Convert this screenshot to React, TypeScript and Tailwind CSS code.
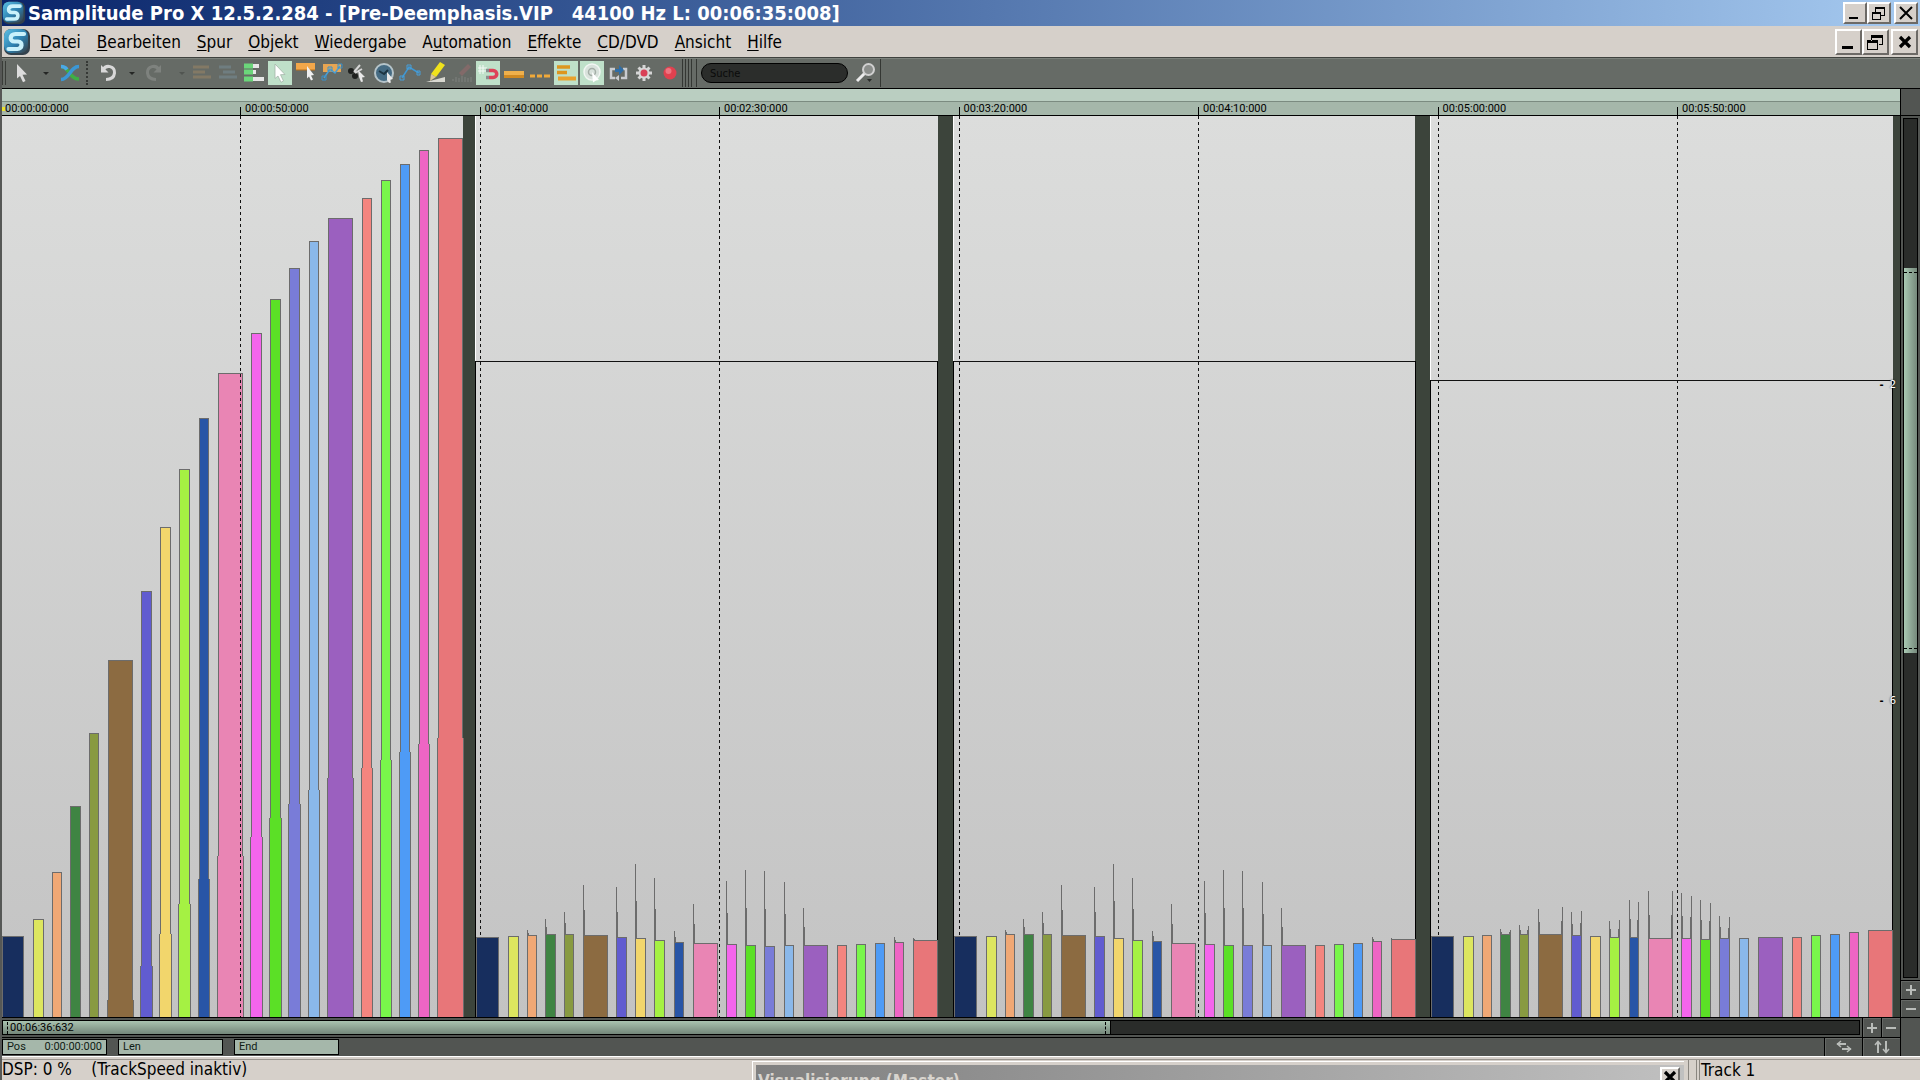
import type { ReactNode } from "react";

const menuItems = [
  ["D", "atei"],
  ["B", "earbeiten"],
  ["S", "pur"],
  ["O", "bjekt"],
  ["W", "iedergabe"],
  ["A", "utomation", "u"],
  ["E", "ffekte"],
  ["C", "D/DVD"],
  ["A", "nsicht"],
  ["H", "ilfe"],
];

const times = [
  "00:00:50:000",
  "00:01:40:000",
  "00:02:30:000",
  "00:03:20:000",
  "00:04:10:000",
  "00:05:00:000",
  "00:05:50:000",
];

const colors = [
  "#172e5e",
  "#dde65f",
  "#f0a875",
  "#3f8443",
  "#889a41",
  "#8c6b41",
  "#615cd0",
  "#f2d66c",
  "#a5f143",
  "#2855a6",
  "#e985b4",
  "#f465ec",
  "#5be026",
  "#797cd8",
  "#8ab8ea",
  "#9b60bf",
  "#f4857f",
  "#79f64b",
  "#4e9bf6",
  "#ee65c4",
  "#e87679",
];

// x, width, top, y where the bar gets one pixel wider on both sides
const rampBars = [
  [2, 22, 936, 0],
  [33, 11, 919, 0],
  [52, 10, 872, 0],
  [70, 11, 806, 0],
  [89, 10, 733, 0],
  [108, 25, 660, 1000],
  [141, 11, 591, 966],
  [160, 11, 527, 934],
  [179, 11, 469, 904],
  [199, 10, 418, 879],
  [218, 25, 373, 856],
  [251, 11, 333, 837],
  [270, 11, 299, 818],
  [289, 11, 268, 804],
  [309, 10, 241, 790],
  [328, 25, 218, 778],
  [362, 10, 198, 768],
  [381, 10, 180, 760],
  [400, 10, 164, 752],
  [419, 10, 150, 744],
  [438, 25, 138, 738],
];

const slots = [
  [0, 23],
  [32, 11],
  [51, 10],
  [69, 11],
  [88, 10],
  [107, 25],
  [140, 11],
  [159, 11],
  [178, 11],
  [198, 10],
  [217, 25],
  [250, 11],
  [269, 11],
  [288, 11],
  [308, 10],
  [327, 25],
  [361, 10],
  [380, 10],
  [399, 10],
  [418, 10],
  [437, 25],
];

type Clip = {
  x: number;
  line: number;
  tops: number[];
  // slot, left peak, right peak
  peaks: number[][];
};

const singlePeaks = [
  [2, 930, 0],
  [3, 919, 0],
  [4, 912, 0],
  [5, 885, 0],
  [6, 887, 0],
  [7, 864, 0],
  [8, 878, 0],
  [9, 931, 0],
  [10, 904, 0],
  [11, 881, 0],
  [12, 870, 0],
  [13, 871, 0],
  [14, 882, 0],
  [15, 908, 0],
  [19, 937, 0],
  [20, 938, 0],
];

const clips: Clip[] = [
  {
    x: 476,
    line: 361,
    tops: [937, 936, 935, 934, 934, 935, 937, 938, 940, 942, 943, 944, 945, 946, 945, 945, 945, 944, 943, 942, 940],
    peaks: singlePeaks,
  },
  {
    x: 954,
    line: 361,
    tops: [936, 936, 934, 934, 934, 935, 936, 938, 940, 941, 943, 944, 945, 945, 945, 945, 945, 944, 943, 941, 939],
    peaks: singlePeaks,
  },
  {
    x: 1431,
    line: 380,
    tops: [936, 936, 935, 934, 934, 934, 935, 936, 937, 937, 938, 938, 939, 938, 938, 937, 937, 935, 934, 932, 930],
    peaks: [
      [3, 929, 930],
      [4, 925, 926],
      [5, 909, 907],
      [6, 912, 911],
      [8, 921, 920],
      [9, 900, 902],
      [10, 891, 891],
      [11, 893, 896],
      [12, 900, 903],
      [13, 916, 917],
    ],
  },
];

const bands = [
  [463, 12],
  [938, 15],
  [1415, 15],
  [1893, 7],
];

const gridLines = [240, 480, 719, 959, 1198, 1438, 1677];

const BOTTOM = 1017;

function Bar({ x, w, top, fill }: { x: number; w: number; top: number; fill: string }) {
  return (
    <>
      <rect x={x} y={top} width={w} height={BOTTOM - top} fill="#6c6c6c" />
      <rect x={x + 1} y={top + 1} width={w - 2} height={BOTTOM - top - 1} fill={fill} />
    </>
  );
}

function Peak({ x, peak, top, dir }: { x: number; peak: number; top: number; dir: number }) {
  const wide = Math.round(peak + (top - peak) * 0.5);
  return (
    <>
      <rect x={x} y={peak} width={1} height={top - peak} fill="#6c6c6c" />
      <rect x={x + dir} y={wide} width={1} height={top - wide} fill="#6c6c6c" />
    </>
  );
}

function Waveform() {
  return (
    <svg
      className="absolute inset-0 h-full w-full"
      viewBox="2 116 1898 901"
      preserveAspectRatio="none"
      shapeRendering="crispEdges"
    >
      {bands.map(([x, w]) => (
        <rect key={x} x={x} y={116} width={w} height={901} fill="#3c443b" />
      ))}
      {rampBars.map(([x, w, top, step], i) => (
        <g key={i}>
          {step > 0 && (
            <rect x={x - 1} y={step} width={w + 2} height={BOTTOM - step} fill="#6c6c6c" />
          )}
          <Bar x={x} w={w} top={top} fill={colors[i]} />
          {step > 0 && (
            <rect x={x} y={step} width={w} height={BOTTOM - step} fill={colors[i]} />
          )}
        </g>
      ))}
      {clips.map((clip) => (
        <g key={clip.x}>
          <rect x={clip.x - 1} y={116} width={1} height={clip.line - 116} fill="#ffffff" />
          <rect x={clip.x - 1} y={clip.line} width={1} height={BOTTOM - clip.line} fill="#000000" />
          <rect x={clip.x} y={clip.line} width={461} height={1} fill="#111111" />
          <rect x={clip.x + 461} y={clip.line} width={1} height={BOTTOM - clip.line} fill="#000000" />
        </g>
      ))}
      {gridLines.map((x) => (
        <line
          key={x}
          x1={x + 0.5}
          x2={x + 0.5}
          y1={116}
          y2={BOTTOM}
          stroke="#111111"
          strokeDasharray="3 3"
        />
      ))}
      {clips.map((clip) => (
        <g key={clip.x}>
          {slots.map(([x, w], i) => (
            <Bar key={i} x={clip.x + x} w={w} top={clip.tops[i]} fill={colors[i]} />
          ))}
          {clip.peaks.map(([slot, left, right]) => (
            <g key={slot}>
              <Peak x={clip.x + slots[slot][0]} peak={left} top={clip.tops[slot]} dir={1} />
              {right > 0 && (
                <Peak
                  x={clip.x + slots[slot][0] + slots[slot][1] - 1}
                  peak={right}
                  top={clip.tops[slot]}
                  dir={-1}
                />
              )}
            </g>
          ))}
        </g>
      ))}
    </svg>
  );
}

function Logo({ className }: { className: string }) {
  return (
    <svg className={className} viewBox="0 0 28 28">
      <defs>
        <linearGradient id="logo" x1="0" y1="0" x2="1" y2="1">
          <stop offset="0" stopColor="#5cc0e4" />
          <stop offset="0.55" stopColor="#2c7fae" />
          <stop offset="1" stopColor="#3a3f44" />
        </linearGradient>
      </defs>
      <rect x="1" y="1" width="26" height="26" rx="7" fill="#33414c" />
      <rect x="1" y="1" width="24" height="24" rx="7" fill="url(#logo)" />
      <path
        d="M21 6H12.500C6.500 6 6 13.500 11.500 13.500H15C20 13.500 19.500 21 14.500 21H5.500"
        fill="none"
        stroke="#c9f1fb"
        strokeWidth="4.200"
        strokeLinecap="round"
      />
    </svg>
  );
}

function MinIcon({ thick = false }) {
  return (
    <svg className="h-5 w-5 shrink-0" viewBox="0 0 20 20" shapeRendering="crispEdges">
      <rect x={thick ? 3 : 4} y={thick ? 14 : 14} width={thick ? 11 : 9} height={thick ? 3 : 2} fill="#000" />
    </svg>
  );
}

function RestoreIcon({ thick = false }) {
  return (
    <svg className="h-5 w-5 shrink-0" viewBox="0 0 20 20" shapeRendering="crispEdges">
      {thick ? (
        <path
          d="M5 3h12v10h-4v-1h3V6H6v3H5zM1 8h11v10H1zM2 11v6h9v-6z"
          fill="#000"
          fillRule="evenodd"
        />
      ) : (
        <path
          d="M6 4h10v9h-4v-1h3V6H7v3H6zM3 9h9v8H3zM4 11v5h7v-5z"
          fill="#000"
          fillRule="evenodd"
        />
      )}
    </svg>
  );
}

function CloseIcon({ thick = false }) {
  return (
    <svg className="h-5 w-5 shrink-0" viewBox="0 0 20 20">
      {thick ? (
        <path d="M5 5L15 15M15 5L5 15" stroke="#000" strokeWidth="3.200" />
      ) : (
        <path d="M4 4L16 16M16 4L4 16" stroke="#000" strokeWidth="2" />
      )}
    </svg>
  );
}

function WinButton({ label, className, children }: { label: string; className: string; children: ReactNode }) {
  return (
    <button
      aria-label={label}
      className={`flex items-center justify-center overflow-hidden border-2 border-t-white border-l-white border-r-[#6d6a66] border-b-[#6d6a66] bg-[#d6d0ca] ${className}`}
    >
      {children}
    </button>
  );
}

function Tool({ label, on = false, dim = false, children }: { label: string; on?: boolean; dim?: boolean; children: ReactNode }) {
  return (
    <button
      aria-label={label}
      className={`flex h-6 w-6 shrink-0 items-center justify-center ${on ? "bg-[#bfe0c9]" : ""}`}
    >
      <svg className={`h-6 w-6 ${dim ? "opacity-30" : ""}`} viewBox="0 0 24 24" fill="none">
        {children}
      </svg>
    </button>
  );
}

const cursorPath = "M7 3L17 13.500L12.500 13.700L15.500 20L13 21.300L10 15L7 17.500Z";

function Caret() {
  return (
    <svg className="h-2 w-2 shrink-0" viewBox="0 0 8 8">
      <path d="M1 3h6l-3 3z" fill="#242624" />
    </svg>
  );
}

function Toolbar() {
  return (
    <div className="flex h-8 shrink-0 items-center border-t border-b border-t-[#3f423e] border-b-black bg-[#666b66] shadow-[inset_0_1px_0_#7d827c]">
      <div className="h-6 w-1 border-x border-[#3a3d39]" />
      <div className="ml-1 flex items-center">
        <Tool label="Auswahl">
          <path d={cursorPath} fill="#dcdcdc" />
        </Tool>
      </div>
      <div className="ml-2">
        <Caret />
      </div>
      <div className="ml-2">
        <Tool label="Crossfade">
          <path d="M3 5.500C11 5.500 11 18 21 18" stroke="#3fae45" strokeWidth="3.500" />
          <path d="M3 18.500C12 18 12 5.500 21 5.500" stroke="#3b97d6" strokeWidth="3.500" />
          <path d="M3 5.500C6 5.500 8 7 9 8.500" stroke="#4aa8e8" strokeWidth="3.500" />
        </Tool>
      </div>
      <div className="ml-1 h-6 border-l-2 border-dotted border-[#363936]" />
      <div className="ml-2 flex items-center gap-2">
        <Tool label="Rückgängig">
          <path d="M5 4v7.500h7.500z" fill="#d8d8d8" />
          <path d="M7 9C10 3 19 5 18.500 12C18 17 15 18.500 10 18.500" stroke="#d8d8d8" strokeWidth="3" />
        </Tool>
        <Caret />
      </div>
      <div className="ml-1.5 flex items-center gap-3">
        <Tool label="Wiederherstellen" dim>
          <path d="M19 4v7.500h-7.500z" fill="#b8b8b8" />
          <path d="M17 9C14 3 5 5 5.500 12C6 17 9 18.500 14 18.500" stroke="#b8b8b8" strokeWidth="3" />
        </Tool>
        <div className="opacity-30">
          <Caret />
        </div>
      </div>
      <div className="ml-1 flex items-center gap-0.5">
        <Tool label="Spuren" dim>
          <path d="M3 6h16M3 11h12M3 16h18" stroke="#c79a63" strokeWidth="3" />
        </Tool>
        <Tool label="Objekte" dim>
          <path d="M3 6h12M7 11h12M3 16h18" stroke="#84a9bd" strokeWidth="3" />
        </Tool>
        <Tool label="Gruppe">
          <path d="M4 5h13M4 11h10M4 18h18" stroke="#e6e6e6" strokeWidth="4" />
          <path d="M2 5h9M2 11h9M2 18h9" stroke="#6bd67a" strokeWidth="5" />
        </Tool>
        <Tool label="Universalmodus" on>
          <path d={cursorPath} fill="#ffffff" stroke="#a5b5aa" strokeWidth="0.800" />
        </Tool>
        <Tool label="Bereich">
          <rect x="2" y="2" width="19" height="7" fill="#f3a74a" />
          <path d="M2 9h19" stroke="#b8701c" />
          <path d="M13 5l7 9-3 .5 2 4-2 1-2-4-2 2z" fill="#f0f0f0" />
        </Tool>
        <Tool label="Objektkurve">
          <rect x="3" y="3" width="18" height="8" fill="#e8a552" />
          <path d="M4 17L10 8L15 12L20 5" stroke="#479fd8" strokeWidth="1.500" />
          <path d="M2 15h4v4H2zM8 6h4v4H8zM18 3h4v4h-4z" stroke="#3991cc" />
        </Tool>
        <Tool label="Schneiden">
          <circle cx="5" cy="10" r="3" fill="#1f211f" />
          <circle cx="9" cy="15" r="3" fill="#1f211f" />
          <path d="M8 11l6-7M9 12l7-4" stroke="#d5d5d5" strokeWidth="2" />
          <path d="M12 9l7 7-3 .5 1 4-2 .5-2-5z" fill="#e8e8e8" />
        </Tool>
        <Tool label="Zeit">
          <circle cx="12" cy="12" r="9" fill="#456b83" stroke="#b5c4ca" strokeWidth="2" />
          <path d="M7 10l5 3 4-4" stroke="#1c3442" strokeWidth="2" />
          <path d="M15 11l6 7-3 .5 1 3-2 .5-2-3z" fill="#e8e8e8" />
        </Tool>
        <Tool label="Automation">
          <path d="M4 17L11 6L21 12" stroke="#3f97d4" strokeWidth="1.500" />
          <path d="M2 15h4v4H2zM9 4h4v4H9zM19 10h3v4h-3z" stroke="#49a0da" />
        </Tool>
        <Tool label="Stift">
          <path d="M2 21h19V16z" fill="#d8d8d0" />
          <path d="M7 13L16 1l5 3-9 12z" fill="#f0e21c" />
          <path d="M7 13l5 3-6 4z" fill="#d8c49a" />
        </Tool>
        <Tool label="Wellenform" dim>
          <path d="M9 12L18 3l3 3-9 9z" fill="#c56a70" />
          <path d="M3 18v2M6 16v5M9 17v4M12 15v6M15 16v5M18 17v4M21 16v5" stroke="#b9b9b9" />
        </Tool>
        <Tool label="Raster" on>
          <path d="M2 7h9M2 10h9M4 4v9M7 4v9" stroke="#f5faf6" />
          <path d="M13 9.500h4c5 0 5 7 0 7h-4" stroke="#dd4459" strokeWidth="3.500" />
          <path d="M10 9.500h3M10 16.500h3" stroke="#8b8d90" strokeWidth="3.500" />
        </Tool>
        <Tool label="Objekt">
          <rect x="2" y="10" width="20" height="7" fill="#efb04c" />
          <path d="M2 15.500h20" stroke="#d18a22" strokeWidth="3" />
        </Tool>
        <Tool label="Teilobjekte">
          <path d="M2 15h5M9 15h5M16 15h6" stroke="#f0a93a" strokeWidth="3" />
        </Tool>
        <Tool label="Ebenen" on>
          <path d="M3 6h13M3 11.500h10" stroke="#dd961f" strokeWidth="3.500" />
          <path d="M4 17.500h18" stroke="#e9a22d" strokeWidth="4" />
        </Tool>
        <Tool label="Scrub" on>
          <circle cx="12" cy="11" r="8" fill="#d9e2dc" stroke="#f2f6f3" strokeWidth="1.500" />
          <circle cx="12" cy="11" r="3.500" stroke="#a4aea7" strokeWidth="1.500" />
          <path d="M12 11l7 8-3 .5-3 2z" fill="#ffffff" />
        </Tool>
        <Tool label="Loop">
          <path d="M9 8H5v9h4M15 17h5V8h-3" stroke="#c9ccd0" strokeWidth="2.500" />
          <path d="M9 8h4V4l5 5-5 5v-3H9z" fill="#2f6da6" />
          <path d="M13 14v6l-4-3z" fill="#c9ccd0" />
        </Tool>
        <Tool label="Einstellungen">
          <path d="M12 4v16M4 12h16M6.500 6.500l11 11M17.500 6.500l-11 11" stroke="#d6d6d6" strokeWidth="3" />
          <circle cx="12" cy="12" r="5.500" fill="#d6d6d6" />
          <circle cx="12" cy="12" r="3.500" fill="#d93f56" />
        </Tool>
        <Tool label="Aufnahme">
          <circle cx="12" cy="12" r="6.500" fill="#e0414f" />
          <circle cx="10.500" cy="10" r="3" fill="#ee7480" />
        </Tool>
      </div>
      <div className="flex h-7 items-center gap-0.5">
        <div className="h-7 w-1 border-x border-[#343733]" />
        <div className="h-7 w-1 border-x border-[#343733]" />
      </div>
      <div className="ml-1 flex h-7 items-center border-r border-l border-[#343733] pl-1">
        <input
          aria-label="Suche"
          placeholder="Suche"
          className="h-5 w-[147px] rounded-full border border-black bg-[#2b2d2b] px-2 text-[11px] placeholder:text-[#0a0b0a]"
        />
        <button aria-label="Suchen" className="ml-1 flex h-6 w-7 items-center justify-center">
          <svg className="h-6 w-6" viewBox="0 0 24 24" fill="none">
            <path d="M3 20L11 12" stroke="#ececec" strokeWidth="3" />
            <circle cx="14.500" cy="8.500" r="5.500" fill="#8b8e8b" stroke="#d0d0d0" strokeWidth="2" />
            <path d="M13 18h5l-2.500 3z" fill="#2a2c2a" />
          </svg>
        </button>
      </div>
    </div>
  );
}

function Field({ label, value }: { label: string; value: string }) {
  return (
    <label className="flex h-4 w-[105px] items-center border border-black bg-[#a5b7aa] px-1 font-[Roboto,sans-serif] text-[11px] leading-3 text-[#0f1c15]">
      {label}
      <input defaultValue={value} className="w-0 flex-1 bg-transparent text-right" />
    </label>
  );
}

function SmallButton({ label, className, children }: { label: string; className: string; children: ReactNode }) {
  return (
    <button
      aria-label={label}
      className={`flex shrink-0 items-center justify-center border-black bg-[#525552] shadow-[inset_1px_1px_0_#666966] ${className}`}
    >
      <svg className="h-4 w-4" viewBox="0 0 16 16" fill="none" stroke="#b9bcb9" strokeWidth="2">
        {children}
      </svg>
    </button>
  );
}

export default function App() {
  return (
    <div className="flex h-screen flex-col overflow-hidden border-l-2 border-[#565856] bg-[#d6d0ca] font-['DejaVu_Sans_Condensed','DejaVu_Sans',sans-serif] text-black">
      <header className="flex h-[26px] shrink-0 items-center bg-linear-to-r from-[#0a246a] to-[#a6caf0] pr-[2px]">
        <Logo className="h-[24px] w-[24px]" />
        <h1 className="flex-1 pl-[2px] text-[20px] leading-6 font-bold whitespace-pre text-white">
          Samplitude Pro X 12.5.2.284 - [Pre-Deemphasis.VIP{"   "}44100 Hz L: 00:06:35:008]
        </h1>
        <WinButton label="Minimieren" className="h-[22px] w-6">
          <MinIcon />
        </WinButton>
        <WinButton label="Wiederherstellen" className="h-[22px] w-6">
          <RestoreIcon />
        </WinButton>
        <WinButton label="Schließen" className="ml-[3px] h-[22px] w-6">
          <CloseIcon />
        </WinButton>
      </header>

      <nav className="flex h-[31px] shrink-0 items-center pr-[2px]">
        <Logo className="ml-[1px] h-[28px] w-[28px]" />
        <div className="flex flex-1 gap-4 pl-[9px] text-[17px] leading-6">
          {menuItems.map(([first, rest, key]) => (
            <button key={first + rest}>
              {key ? (
                <>
                  {first}
                  <u className="underline-offset-2">{key}</u>
                  {rest.slice(1)}
                </>
              ) : (
                <>
                  <u className="underline-offset-2">{first}</u>
                  {rest}
                </>
              )}
            </button>
          ))}
        </div>
        <WinButton label="Fenster minimieren" className="h-[26px] w-[27px]">
          <MinIcon thick />
        </WinButton>
        <WinButton label="Fenster wiederherstellen" className="h-[26px] w-[27px]">
          <RestoreIcon thick />
        </WinButton>
        <WinButton label="Fenster schließen" className="ml-[2px] h-[26px] w-[27px]">
          <CloseIcon thick />
        </WinButton>
      </nav>

      <Toolbar />

      <main className="flex min-h-0 flex-1">
        <section className="flex min-w-0 flex-1 flex-col">
          <div className="h-[13px] shrink-0 border-b border-[#7b8b80] bg-[#bacec1]" />
          <div className="flex h-[14px] shrink-0 items-end overflow-hidden border-b border-black bg-[#a5b7aa] font-[Roboto,sans-serif] text-[11px] leading-3">
            <div className="flex w-[12.54%] shrink-0 items-center">
              <span className="h-1 w-[3px] bg-[#e8e230]" />
              00:00:00:000
            </div>
            {times.map((t) => (
              <div key={t} className="h-2 w-[12.62%] shrink-0 border-l border-black">
                <div className="-mt-1 pl-1">{t}</div>
              </div>
            ))}
          </div>
          <div className="relative min-h-0 flex-1 bg-linear-to-b from-[#dcdddc] to-[#c3c3c3]">
            <Waveform />
            <div className="absolute top-[29%] right-1 flex items-center gap-1.5 text-[11px] leading-4">
              <b>-</b>
              <span className="text-white [text-shadow:0_0_2px_#000]">2</span>
            </div>
            <div className="absolute top-[64%] right-1 flex items-center gap-1.5 text-[11px] leading-4">
              <b>-</b>
              <span className="text-white [text-shadow:0_0_2px_#000]">6</span>
            </div>
          </div>
          <div className="flex h-[21px] shrink-0 border-y border-black bg-[#525552]">
            <div className="my-[2px] mr-[2px] flex flex-1 border border-black bg-[#2a2c2a]">
              <div className="flex w-[59.7%] items-center border-r border-black bg-linear-to-b from-[#a9c3b0] to-[#74877a] pl-1 font-[Roboto,sans-serif] text-[11px] leading-3">
                <span className="mr-0.5 h-3 border-l border-dashed border-black" />
                00:06:36:632
                <span className="mr-1 ml-auto h-3 border-l border-dashed border-black" />
              </div>
            </div>
            <SmallButton label="Horizontal vergrößern" className="w-[19px] border-l">
              <path d="M3 8h10M8 3v10" />
            </SmallButton>
            <SmallButton label="Horizontal verkleinern" className="w-[19px] border-l">
              <path d="M3 8h10" />
            </SmallButton>
          </div>
          <div className="flex h-[18px] shrink-0 items-center bg-[#525552]">
            <div className="flex flex-1 gap-[11px]">
              <Field label="Pos" value="0:00:00:000" />
              <Field label="Len" value="" />
              <Field label="End" value="" />
            </div>
            <SmallButton label="Horizontal einpassen" className="h-full w-[38px] border-l">
              <path d="M1 5h9M6 10h9" />
              <path d="M5 2L1.500 5L5 8M11 7l3.500 3L11 13" strokeWidth="1.500" />
            </SmallButton>
            <SmallButton label="Vertikal einpassen" className="h-full w-[38px] border-l">
              <path d="M4 3v11M12 2v11" />
              <path d="M1 6L4 2.500L7 6M9 10l3 3.500L15 10" strokeWidth="1.500" />
            </SmallButton>
          </div>
        </section>

        <aside className="flex w-5 shrink-0 flex-col border-l border-black bg-[#525552]">
          <div className="h-[27px] shrink-0 border-b border-black" />
          <div className="mx-[2px] my-[2px] flex flex-1 flex-col border border-black bg-[#2a2c2a]">
            <div className="h-[17.4%]" />
            <div className="flex h-[44.8%] flex-col justify-between bg-linear-to-r from-[#a9c9b3] to-[#76897c] py-1">
              <span className="border-t border-dashed border-black" />
              <span className="border-t border-dashed border-black" />
            </div>
          </div>
          <SmallButton label="Vertikal vergrößern" className="h-[19px] border-t">
            <path d="M3 8h10M8 3v10" />
          </SmallButton>
          <SmallButton label="Vertikal verkleinern" className="h-[19px] border-y">
            <path d="M3 8h10" />
          </SmallButton>
          <div className="h-[38px] shrink-0" />
        </aside>
      </main>

      <footer className="flex h-6 shrink-0 overflow-hidden border-t border-white shadow-[inset_0_2px_0_#d6d0ca,inset_0_3px_0_#9a958f]">
        <div className="w-[39.1%] pt-[2px] text-[17px] leading-5 whitespace-pre">
          DSP: 0 %{"    "}(TrackSpeed inaktiv)
        </div>
        <div className="mt-1 flex flex-1 border-t border-l border-white pt-[3px] pl-[3px]">
          <div className="flex flex-1 items-start bg-linear-to-r from-[#808080] to-[#c0c0c0] pr-1 pl-[2px]">
            <h2 className="flex-1 pt-[6px] text-[17px] leading-5 font-bold text-[#d8d4ce]">Visualisierung (Master)</h2>
            <WinButton label="Visualisierung schließen" className="mt-[2px] h-5 w-5 shrink-0">
              <CloseIcon thick />
            </WinButton>
          </div>
        </div>
        <div className="mt-[3px] ml-1 w-[9px] border-r border-l border-[#8a8680]" />
        <div className="mt-[3px] ml-[2px] w-[221px] border-l border-[#8a8680] pl-px text-[17px] leading-5">
          Track 1
        </div>
      </footer>
    </div>
  );
}
